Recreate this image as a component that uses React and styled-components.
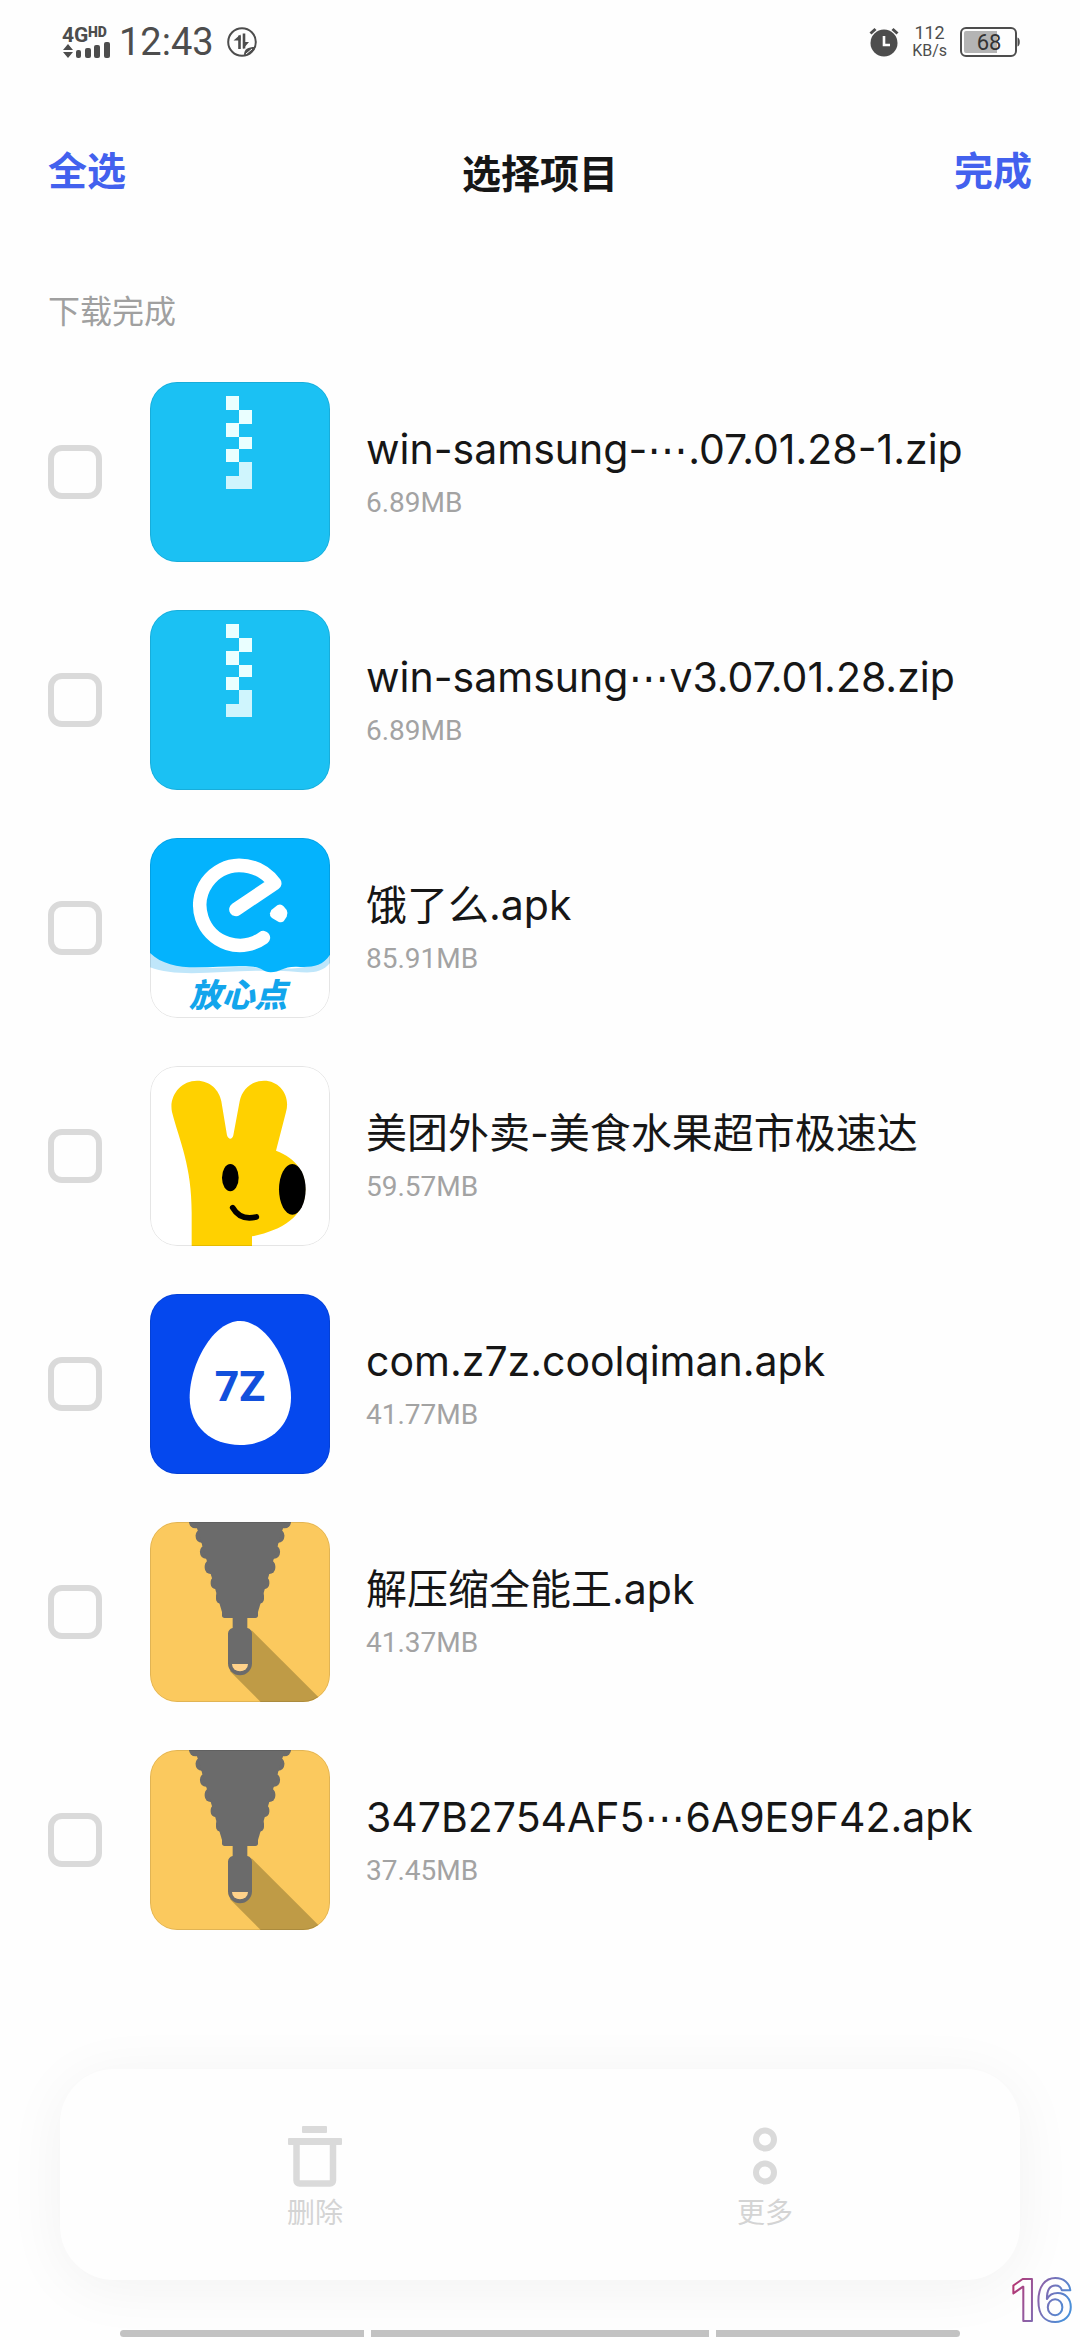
import React, { useState } from 'react';
import styled, { createGlobalStyle } from 'styled-components';

const GlobalStyle = createGlobalStyle`
  * {
    box-sizing: border-box;
  }

  body {
    margin: 0;
    background: #fefefe;
    font-family: Inter, "Noto Sans CJK SC", sans-serif;
    color: #161616;
  }

  button {
    border: none;
    padding: 0;
    background: none;
    font-family: inherit;
    cursor: pointer;
  }
`;

const Page = styled.div`
  position: relative;
  min-height: 100vh;
  display: flex;
  flex-direction: column;
  overflow: hidden;
`;

const StatusBar = styled.div`
  display: flex;
  justify-content: space-between;
  align-items: center;
  height: 84px;
  padding: 0 60px;
  color: #4d4d4d;
  font-family: Roboto, sans-serif;
`;

const StatusGroup = styled.div`
  display: flex;
  align-items: center;
  gap: ${(props) => props.$gap}px;
`;

const Clock = styled.span`
  padding-right: 4px;
  font-size: 38px;
  line-height: 40px;
`;

const NetSpeed = styled.span`
  display: flex;
  flex-direction: column;
  align-items: center;
  font-size: 16px;
  line-height: 18px;
`;

const NetValue = styled.span`
  font-size: 18px;
`;

const Header = styled.header`
  display: flex;
  justify-content: space-between;
  align-items: flex-start;
  padding: 58px 48px 0;
`;

const HeaderButton = styled.button`
  font-size: 39px;
  line-height: 58px;
  font-weight: 700;
  color: #4361ee;
`;

const Title = styled.h1`
  margin: 0;
  font-size: 39px;
  line-height: 64px;
  font-weight: 700;
`;

const SectionLabel = styled.h2`
  margin: 0;
  padding: 82px 48px 46px;
  font-size: 32px;
  line-height: 48px;
  font-weight: 400;
  color: #a0a0a0;
`;

const FileList = styled.ul`
  display: flex;
  flex-direction: column;
  gap: 48px;
  margin: 0;
  padding: 0 48px;
  list-style: none;
`;

const FileRow = styled.label`
  display: flex;
  align-items: center;
  cursor: pointer;
`;

const Checkbox = styled.input`
  appearance: none;
  flex: none;
  width: 54px;
  height: 54px;
  margin: 0 48px 0 0;
  border: 6px solid #dadada;
  border-radius: 14px;

  &:checked {
    border-color: #4361ee;
    background: #4361ee;
  }
`;

const Thumb = styled.span`
  flex: none;
  width: 180px;
  height: 180px;
  margin-right: 36px;
  border-radius: 27px;
  overflow: hidden;
  background: white;
  position: relative;

  &::after {
    content: '';
    position: absolute;
    inset: 0;
    border: 1px solid rgba(0, 0, 0, 0.1);
    border-radius: 27px;
  }

  svg {
    display: block;
    width: 100%;
    height: 100%;
  }
`;

const FileText = styled.span`
  min-width: 0;
  display: flex;
  flex-direction: column;
`;

const FileName = styled.span`
  font-size: 41px;
  line-height: 62px;
  white-space: nowrap;
`;

const Ellipsis = styled.span`
  font-family: "DejaVu Sans", sans-serif;
  line-height: 1;
`;

const FileSize = styled.span`
  font-family: Roboto, sans-serif;
  font-size: 28px;
  line-height: 46px;
  color: #a3a3a3;
`;

const ActionBar = styled.div`
  display: flex;
  margin: auto 60px 50px;
  padding: 57px 30px 46px;
  border-radius: 54px;
  background: #fefefe;
  box-shadow: 0 8px 60px rgba(0, 0, 0, 0.05);
`;

const ActionButton = styled.button`
  flex: 1;
  display: flex;
  flex-direction: column;
  align-items: center;
  gap: 4px;
  font-size: 28px;
  line-height: 42px;
  font-weight: 400;
  color: #d4d4d4;
`;

const NavBar = styled.div`
  display: grid;
  grid-template-columns: 245fr 338fr 245fr;
  gap: 7px;
  padding: 0 120px 3px;
`;

const NavPill = styled.span`
  height: 7px;
  background: #c2c2c2;

  &:first-child {
    border-radius: 4px 0 0 4px;
  }

  &:last-child {
    border-radius: 0 4px 4px 0;
  }
`;

const CornerBadge = styled.svg`
  position: absolute;
  right: 0;
  bottom: 0;
`;

const SignalIcon = () => (
  <svg width="50" height="36" viewBox="0 0 50 36" fill="currentColor" fontFamily="Roboto, sans-serif" fontWeight="700">
    <text x="2" y="18" fontSize="21">4G</text>
    <text x="28" y="13" fontSize="14" fontWeight="900">HD</text>
    <path d="M3 26l5-6 5 6zM3 28h10l-5 6z" />
    <rect x="16" y="26" width="5" height="8" rx="2" />
    <rect x="25" y="24" width="6" height="10" rx="2" />
    <rect x="34" y="21" width="6" height="13" rx="2" />
    <rect x="44" y="18" width="6" height="16" rx="2" />
  </svg>
);

const DataIcon = () => (
  <svg width="30" height="30" viewBox="0 0 30 30" fill="none" stroke="currentColor" strokeWidth="2">
    <circle cx="15" cy="15" r="13.8" />
    <path d="M12.500 22V8.500" strokeWidth="2.6" />
    <path d="M17 6.500V21.500" strokeWidth="2.6" />
    <path d="M13.500 7.500v6l-7 0zM16 22v-7l6 0z" fill="currentColor" stroke="none" />
    <path d="M17 28c0-6 4-8 11-8-1 4-4 7-11 8z" fill="currentColor" stroke="none" />
    <path d="M19 27l6-5" stroke="#fefefe" strokeWidth="1" />
  </svg>
);

const AlarmIcon = () => (
  <svg width="30" height="30" viewBox="0 0 30 30" fill="none">
    <circle cx="15" cy="16" r="13.5" fill="#4d4d4d" />
    <path d="M1.500 6.500l5-4.500M28.500 6.500l-5-4.500" stroke="#4d4d4d" strokeWidth="3" />
    <path d="M15 9v9h6" stroke="#fefefe" strokeWidth="2.600" />
  </svg>
);

const BatteryIcon = () => (
  <svg width="60" height="30" viewBox="0 0 60 30">
    <rect x="1" y="1" width="55" height="28" rx="5" fill="none" stroke="#4d4d4d" strokeWidth="2" />
    <path d="M6 4h31v22H6a2 2 0 0 1-2-2V6a2 2 0 0 1 2-2z" fill="#b4b4b4" />
    <path d="M57.500 10.500c3 0 3 9 0 9z" fill="#4d4d4d" />
    <text x="29" y="23" fontSize="22" textAnchor="middle" fill="#333" fontFamily="Roboto, sans-serif">68</text>
  </svg>
);

const ZipIcon = () => (
  <svg viewBox="0 0 180 180">
    <rect width="180" height="180" fill="#1bc1f3" />
    <g fill="#eaffff">
      <rect x="76" y="14" width="13" height="14" />
      <rect x="89" y="28" width="13" height="14" />
      <rect x="76" y="41" width="13" height="14" />
      <rect x="89" y="55" width="13" height="12" />
      <rect x="76" y="67" width="13" height="13" />
      <path d="M89 80h13v27H76V94h13z" fill="#cff5fd" />
    </g>
  </svg>
);

const ElemeIcon = () => (
  <svg viewBox="0 0 540 540">
    <rect width="540" height="540" fill="white" />
    <path d="M0 340C60 390 150 392 240 388C350 380 480 420 540 345V375C500 425 430 392 380 400C260 390 90 425 0 388z" fill="#bfe6fa" />
    <path d="M0 0H540V350C515 388 480 388 440 386C400 385 390 402 362 403C340 402 335 388 310 386C250 382 200 388 140 388C80 388 35 378 0 345z" fill="#04b3fd" />
    <path d="M258 214L374 136C345 97 309 82 267 82A120 120 0 1 0 340 299" fill="none" stroke="white" strokeWidth="41" strokeLinecap="round" strokeLinejoin="round" />
    <path d="M364 216l18-14q10-6 18 2l10 12q5 10 0 20l-9 14q-7 5-16 1l-19-11q-8-7-6-14z" fill="white" />
    <text x="264" y="506" fontSize="98" fontWeight="900" fontStyle="italic" textAnchor="middle" fill="#12a5ec" fontFamily="'Noto Sans CJK SC', sans-serif">放心点</text>
  </svg>
);

const MeituanIcon = () => (
  <svg viewBox="0 0 540 540">
    <rect width="540" height="540" fill="white" />
    <path d="M125 540V440C125 300 90 230 66 138C56 90 92 44 141 44C180 44 208 72 214 106L231 208C235 222 247 222 250 208L269 106C276 70 304 44 342 44C390 44 422 90 408 138L378 254C440 277 466 320 466 370C466 455 390 495 306 511V540z" fill="#ffd100" />
    <ellipse cx="241" cy="335" rx="25" ry="41" />
    <ellipse cx="427" cy="370" rx="40" ry="76" />
    <path d="M248 425C265 455 290 460 319 453" fill="none" stroke="black" strokeWidth="17" strokeLinecap="round" />
  </svg>
);

const SevenZIcon = () => (
  <svg viewBox="0 0 540 540">
    <rect width="540" height="540" fill="#0548ee" />
    <path d="M270 81C350 81 423 210 423 310C423 400 355 453 270 453C185 453 119 400 119 310C119 210 190 81 270 81z" fill="white" />
    <text x="270" y="320" fontSize="128" fontWeight="800" textAnchor="middle" fill="#1250dc" fontFamily="Roboto, sans-serif">7Z</text>
  </svg>
);

const ZipperIcon = () => (
  <svg viewBox="0 0 540 540">
    <rect width="540" height="540" fill="#fbc95e" />
    <path d="M305 325L520 540H332L240 448z" fill="#bf9b46" />
    <path d="M136 0H404L316 286H292V318Q306 322 306 336V424A36 36 0 0 1 234 424V336Q234 322 248 318V286H224z" fill="#6b6b6b" />
    <g fill="#6b6b6b">
      <rect x="117" y="-20" width="306" height="39" rx="19" />
      <rect x="137" y="22" width="266" height="40" rx="18" />
      <rect x="150" y="70" width="240" height="40" rx="18" />
      <rect x="164" y="114" width="212" height="42" rx="18" />
      <rect x="182" y="163" width="176" height="38" rx="16" />
      <rect x="198" y="207" width="144" height="38" rx="14" />
      <rect x="216" y="250" width="108" height="38" rx="8" />
      <path d="M136 0H404L324 270H216z" />
    </g>
    <path d="M246 426H294A24 22 0 0 1 246 426z" fill="#ffd28a" />
  </svg>
);

const TrashIcon = () => (
  <svg width="62" height="62" viewBox="0 0 62 62" fill="#dadada">
    <rect x="18" y="0" width="25" height="7" rx="1" />
    <rect x="4" y="12" width="54" height="7" rx="1" />
    <path d="M12.500 18V54.500a3 3 0 0 0 3 3H46a3 3 0 0 0 3-3V18" fill="none" stroke="#dadada" strokeWidth="6.500" />
  </svg>
);

const MoreIcon = () => (
  <svg width="62" height="62" viewBox="0 0 62 62" fill="none" stroke="#dadada" strokeWidth="6">
    <circle cx="31" cy="13.500" r="9" />
    <circle cx="31" cy="46.500" r="9" />
  </svg>
);

const files = [
  { id: 'zip-1', start: 'win-samsung-', end: '.07.01.28-1.zip', size: '6.89MB', Icon: ZipIcon },
  { id: 'zip-2', start: 'win-samsung', end: 'v3.07.01.28.zip', size: '6.89MB', Icon: ZipIcon },
  { id: 'eleme', start: '饿了么.apk', size: '85.91MB', Icon: ElemeIcon },
  { id: 'meituan', start: '美团外卖-美食水果超市极速达', size: '59.57MB', Icon: MeituanIcon },
  { id: 'z7z', start: 'com.z7z.coolqiman.apk', size: '41.77MB', Icon: SevenZIcon },
  { id: 'unzip', start: '解压缩全能王.apk', size: '41.37MB', Icon: ZipperIcon },
  { id: 'unzip-2', start: '347B2754AF5', end: '6A9E9F42.apk', size: '37.45MB', Icon: ZipperIcon },
];

const App = () => {
  const [selected, setSelected] = useState([]);

  const toggle = (id) => {
    setSelected((current) =>
      current.includes(id) ? current.filter((item) => item !== id) : [...current, id]
    );
  };

  return (
    <Page>
      <GlobalStyle />
      <StatusBar>
        <StatusGroup $gap={9}>
          <SignalIcon />
          <Clock>12:43</Clock>
          <DataIcon />
        </StatusGroup>
        <StatusGroup $gap={13}>
          <AlarmIcon />
          <NetSpeed>
            <NetValue>112</NetValue>
            <span>KB/s</span>
          </NetSpeed>
          <BatteryIcon />
        </StatusGroup>
      </StatusBar>

      <Header>
        <HeaderButton onClick={() => setSelected(files.map((file) => file.id))}>全选</HeaderButton>
        <Title>选择项目</Title>
        <HeaderButton onClick={() => setSelected([])}>完成</HeaderButton>
      </Header>

      <SectionLabel>下载完成</SectionLabel>

      <FileList>
        {files.map(({ id, start, end, size, Icon }) => (
          <li key={id}>
            <FileRow htmlFor={id}>
              <Checkbox
                id={id}
                type="checkbox"
                checked={selected.includes(id)}
                onChange={() => toggle(id)}
              />
              <Thumb>
                <Icon />
              </Thumb>
              <FileText>
                <FileName>
                  {start}
                  {end && <Ellipsis>⋯</Ellipsis>}
                  {end}
                </FileName>
                <FileSize>{size}</FileSize>
              </FileText>
            </FileRow>
          </li>
        ))}
      </FileList>

      <ActionBar>
        <ActionButton>
          <TrashIcon />
          删除
        </ActionButton>
        <ActionButton>
          <MoreIcon />
          更多
        </ActionButton>
      </ActionBar>

      <NavBar>
        <NavPill />
        <NavPill />
        <NavPill />
      </NavBar>

      <CornerBadge width="80" height="84" viewBox="0 0 80 84">
        <defs>
          <linearGradient id="badge" x1="0" y1="0" x2="1" y2="0.4">
            <stop offset="0" stopColor="#c2255f" />
            <stop offset="0.5" stopColor="#8c62a8" />
            <stop offset="1" stopColor="#4a8fd8" />
          </linearGradient>
        </defs>
        <text
          x="42"
          y="65"
          fontSize="58"
          fontWeight="700"
          textAnchor="middle"
          fill="#fefefe"
          stroke="url(#badge)"
          strokeWidth="2"
          strokeLinejoin="round"
          fontFamily="Inter, sans-serif"
        >
          16
        </text>
      </CornerBadge>
    </Page>
  );
};

export default App;
